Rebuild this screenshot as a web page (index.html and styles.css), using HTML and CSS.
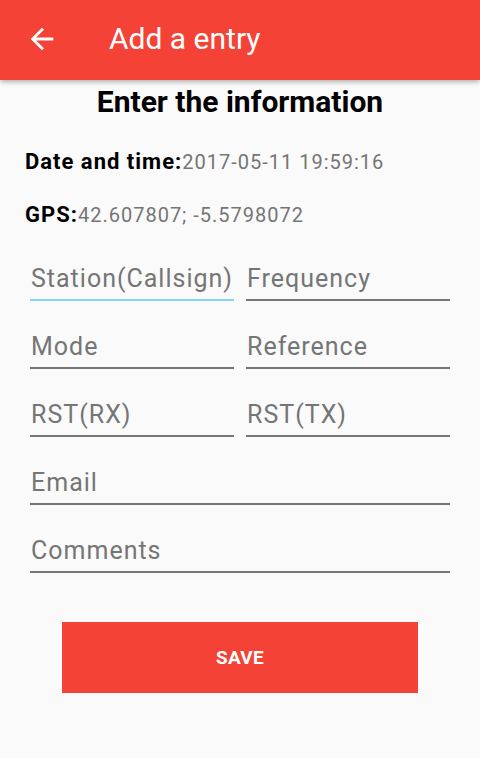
FILE: index.html
```html
<!DOCTYPE html>
<html lang="en">
<head>
<meta charset="utf-8">
<title>Add a entry</title>
<link rel="stylesheet" href="styles.css">
</head>
<body>
<header class="appbar">
  <span class="back">
    <svg viewBox="0 0 24 24" width="34" height="34"><path fill="#fff" d="M20 11H7.83l5.59-5.59L12 4l-8 8 8 8 1.41-1.41L7.83 13H20v-2z"/></svg>
  </span>
  <h1 class="title">Add a entry</h1>
</header>
<main class="content">
  <h2 class="heading">Enter the information</h2>
  <p class="info date"><b>Date and time:</b><span class="val">2017-05-11 19:59:16</span></p>
  <p class="info gps"><b>GPS:</b><span class="val">42.607807; -5.5798072</span></p>
  <div class="fields">
    <div class="field focused">Station(Callsign)</div>
    <div class="field">Frequency</div>
    <div class="field">Mode</div>
    <div class="field">Reference</div>
    <div class="field">RST(RX)</div>
    <div class="field">RST(TX)</div>
    <div class="field wide">Email</div>
    <div class="field wide">Comments</div>
  </div>
  <div class="actions"><button class="save">SAVE</button></div>
</main>
</body>
</html>
```
FILE: styles.css
```css
html, body {
  margin: 0;
  padding: 0;
  background: #fafafa;
  font-family: Roboto, "Liberation Sans", sans-serif;
}
.appbar {
  height: 80px;
  background: #f44336;
  display: flex;
  align-items: center;
  box-shadow: 0 2px 5px rgba(0,0,0,0.3);
  position: relative;
  z-index: 1;
}
.back {
  width: 34px;
  height: 34px;
  margin-left: 25px;
  margin-top: -2px;
  display: flex;
}
.title {
  margin: -3px 0 0 50px;
  font-weight: 400;
  font-size: 30px;
  line-height: 36px;
  color: #fff;
}
.heading {
  margin: 0;
  padding-top: 4px;
  text-align: center;
  font-size: 30px;
  font-weight: 700;
  color: #000;
  line-height: 36px;
}
.info {
  margin: 0;
  padding-left: 25px;
  font-size: 22px;
  line-height: 26px;
  letter-spacing: 1px;
  color: #000;
}
.info.date { margin-top: 29px; }
.info.gps { margin-top: 27px; }
.info b { font-weight: 700; }
.val {
  font-size: 20px;
  color: #757575;
}
.fields {
  display: grid;
  grid-template-columns: 204px 204px;
  column-gap: 12px;
  margin: 25px 30px 0;
}
.field {
  box-sizing: border-box;
  height: 48px;
  margin-top: 20px;
  padding: 11px 0 0 1px;
  border-bottom: 2px solid #757575;
  font-size: 25px;
  line-height: 30px;
  letter-spacing: 1px;
  color: #757575;
  white-space: nowrap;
}
.field:nth-child(-n+2) { margin-top: 0; }
.field.focused { border-bottom-color: #81d4fa; }
.field.wide { grid-column: 1 / 3; }
.actions {
  display: flex;
  justify-content: center;
  margin-top: 49px;
}
.save {
  width: 356px;
  height: 71px;
  border: 0;
  border-radius: 0;
  background: #f44336;
  color: #fff;
  font-family: Roboto, "Liberation Sans", sans-serif;
  font-weight: 700;
  font-size: 19px;
  letter-spacing: 0.3px;
  padding: 0;
}
```
